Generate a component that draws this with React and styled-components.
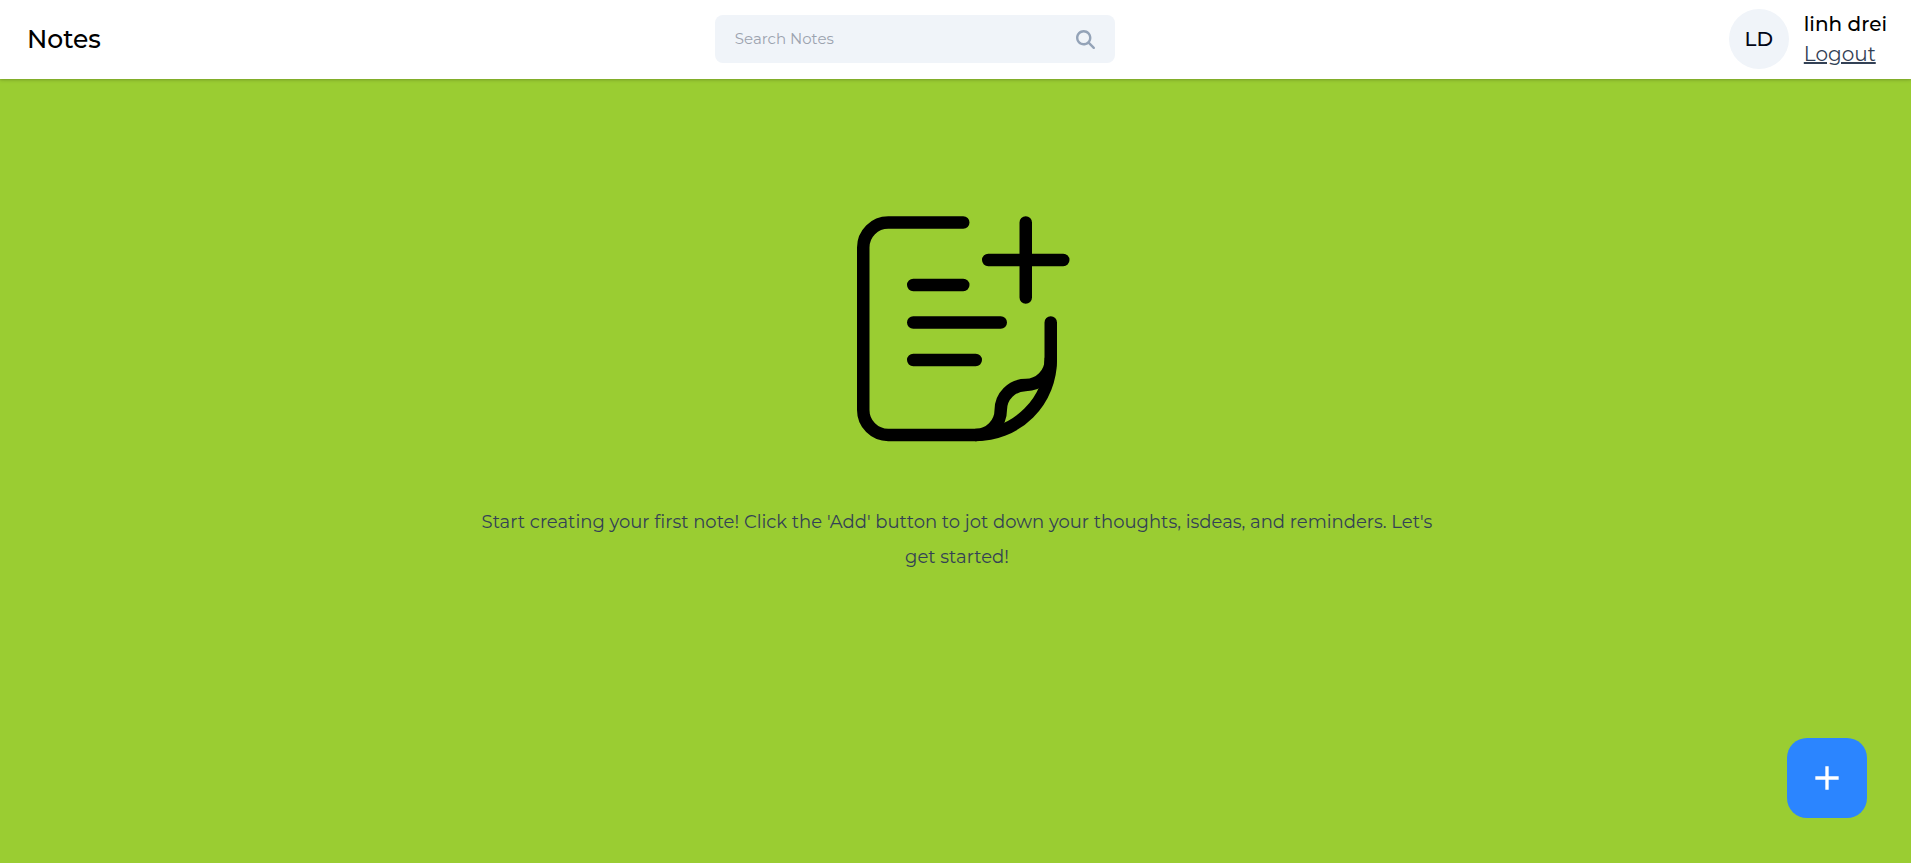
import React, { useState } from "react";
import styled, { createGlobalStyle } from "styled-components";
import { FaMagnifyingGlass } from "react-icons/fa6";
import { MdAdd } from "react-icons/md";

const GlobalStyle = createGlobalStyle`
  *, *::before, *::after { box-sizing: border-box; }
  body {
    margin: 0;
    background: #9acd32;
    font-family: Montserrat, Inter, sans-serif;
    color: #000;
  }
`;

const Header = styled.header`
  display: flex;
  align-items: center;
  justify-content: space-between;
  padding: 9px 24px 10px 27px;
  background: #fff;
  box-shadow: 0 1px 4px rgba(0, 0, 0, 0.15), 0 1px 2px rgba(0, 0, 0, 0.1);
`;

const Title = styled.h1`
  margin: 0;
  font-size: 25px;
  font-weight: 500;
  line-height: 36px;
`;

const SearchForm = styled.form`
  display: flex;
  align-items: center;
  width: 400px;
  height: 48px;
  padding: 0 20px;
  border-radius: 8px;
  background: #f0f4f9;
`;

const SearchInput = styled.input`
  flex: 1;
  min-width: 0;
  padding: 0;
  border: 0;
  outline: 0;
  background: transparent;
  font: inherit;
  font-size: 15px;
  line-height: 24px;

  &::placeholder {
    color: #9ca3af;
    opacity: 1;
  }
`;

const SearchButton = styled.button`
  display: flex;
  padding: 0;
  border: 0;
  background: transparent;
  color: #94a3b8;
  font-size: 19px;
  cursor: pointer;
`;

const Profile = styled.div`
  display: flex;
  align-items: center;
  gap: 15px;
`;

const Avatar = styled.div`
  display: flex;
  align-items: center;
  justify-content: center;
  width: 60px;
  height: 60px;
  border-radius: 50%;
  background: #f0f4f9;
  color: #020617;
  font-size: 20px;
  font-weight: 500;
`;

const ProfileText = styled.div`
  display: flex;
  flex-direction: column;
  align-items: flex-start;
`;

const UserName = styled.span`
  font-size: 20px;
  font-weight: 500;
  line-height: 30px;
`;

const LogoutButton = styled.button`
  padding: 0;
  border: 0;
  background: transparent;
  color: #334155;
  font: inherit;
  font-size: 20px;
  line-height: 30px;
  text-decoration: underline;
  cursor: pointer;
`;

const EmptyState = styled.main`
  display: flex;
  flex-direction: column;
  align-items: center;
  padding: 131px 0 64px 3px;
`;

const NoteDrawing = styled.svg`
  width: 250px;
  height: 250px;
  fill: none;
  stroke: #000;
  stroke-width: 1;
  stroke-linecap: round;
`;

const Message = styled.p`
  width: 50%;
  margin: 45px 0 0;
  color: #334155;
  font-size: 18px;
  font-weight: 400;
  line-height: 35px;
  text-align: center;
`;

const AddButton = styled.button`
  position: fixed;
  right: 44px;
  bottom: 45px;
  display: flex;
  align-items: center;
  justify-content: center;
  width: 80px;
  height: 80px;
  padding: 0;
  border: 0;
  border-radius: 20px;
  background: #2b85ff;
  color: #fff;
  font-size: 40px;
  cursor: pointer;
`;

export default function App() {
  const [query, setQuery] = useState("");

  return (
    <>
      <GlobalStyle />
      <Header>
        <Title>Notes</Title>
        <SearchForm role="search" onSubmit={(e) => e.preventDefault()}>
          <SearchInput
            type="text"
            aria-label="Search Notes"
            placeholder="Search Notes"
            value={query}
            onChange={(e) => setQuery(e.target.value)}
          />
          <SearchButton type="submit" aria-label="Search">
            <FaMagnifyingGlass />
          </SearchButton>
        </SearchForm>
        <Profile>
          <Avatar>LD</Avatar>
          <ProfileText>
            <UserName>linh drei</UserName>
            <LogoutButton type="button">Logout</LogoutButton>
          </ProfileText>
        </Profile>
      </Header>
      <EmptyState>
        <NoteDrawing viewBox="-2.5 -1 20 20" aria-hidden="true">
          <path d="M8 0H2a2 2 0 0 0-2 2v13a2 2 0 0 0 2 2h7a6 6 0 0 0 6-6V8" />
          <path d="M9 17a2 2 0 0 0 2-2a2 2 0 0 1 2-2a2 2 0 0 0 2-2" />
          <path d="M4 5h4M4 8h7M4 11h5M10 3h6M13 0v6" />
        </NoteDrawing>
        <Message>
          Start creating your first note! Click the 'Add' button to jot down
          your thoughts, isdeas, and reminders. Let's get started!
        </Message>
      </EmptyState>
      <AddButton type="button" aria-label="Add note">
        <MdAdd />
      </AddButton>
    </>
  );
}
